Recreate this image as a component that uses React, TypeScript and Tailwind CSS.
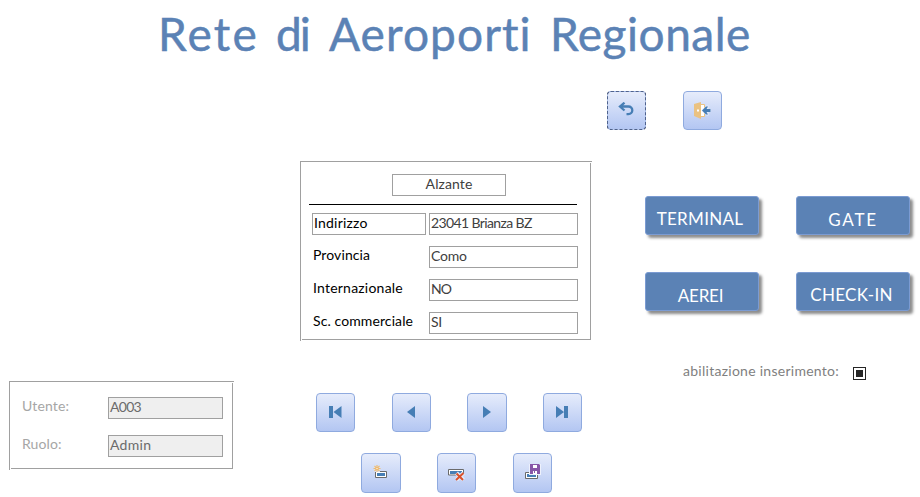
import type { ReactNode } from 'react';

const body = "font-['Lato','Noto_Sans',sans-serif]";

function IconButton({ className = '', focused = false, label, children }: { className?: string; focused?: boolean; label: string; children: ReactNode }) {
  return (
    <button
      aria-label={label}
      className={`flex shrink-0 items-center justify-center rounded-[4px] border bg-linear-to-b from-[#e6ecfb] to-[#b3c6f2] ${focused ? 'border-dashed border-[#111c38] outline outline-1 -outline-offset-1 outline-[#8faadf]/50' : 'border-[#8faadf]'} ${className || 'h-[39px] w-[39px]'}`}
    >
      {children}
    </button>
  );
}

function Panel({ className, children }: { className: string; children: ReactNode }) {
  return (
    <div className={`relative border border-[#a0a0a0] ${className}`}>
      {children}
      <span className="absolute -top-px -right-[2px] h-px w-px bg-[#a0a0a0]" />
      <span className="absolute top-0 -right-px h-px w-px bg-white" />
      <span className="absolute -bottom-[2px] -left-px h-px w-px bg-[#a0a0a0]" />
      <span className="absolute -bottom-px left-0 h-px w-px bg-white" />
    </div>
  );
}

function NavButton({ children, pad, tracking, height = 'h-[39px]' }: { children: string; pad: string; tracking: string; height?: string }) {
  return (
    <button className={`w-[114px] shrink-0 rounded-[3px] border border-[#7b9bd2] bg-[#5b82b5] text-center font-['Lato',sans-serif] text-[17px] leading-[20px] text-white shadow-[3px_3px_3px_#8c8c8c] ${pad} ${tracking} ${height}`}>
      <span className="block">{children}</span>
    </button>
  );
}

function Row({ label, value, boxed = false, labelTrack, valueTrack }: { label: string; value: string; boxed?: boolean; labelTrack: string; valueTrack: string }) {
  return (
    <div className="flex h-[22px] gap-[3px]">
      <div className={`w-[114px] pl-px whitespace-nowrap text-black ${labelTrack} ${boxed ? 'border border-[#a0a0a0] leading-[18px]' : 'leading-[17px]'}`}>{label}</div>
      <div className={`w-[149px] whitespace-nowrap border border-[#a0a0a0] pl-px leading-[18px] text-[#404040] ${valueTrack}`}>{value}</div>
    </div>
  );
}

function UserRow({ label, value, labelTrack, valueTrack }: { label: string; value: string; labelTrack: string; valueTrack: string }) {
  return (
    <div className="flex h-[22px]">
      <div className={`w-[86px] leading-[17px] text-[#a6a6a6] ${labelTrack}`}>{label}</div>
      <div className={`w-[115px] border border-[#a0a0a0] bg-[#efefef] pl-px leading-[18px] text-[#6b6b6b] ${valueTrack}`}>{value}</div>
    </div>
  );
}

export default function App() {
  return (
    <div className={`h-[497px] w-[920px] overflow-hidden bg-white text-[14px] ${body}`}>
      <h1 className="flex h-[91px] pl-[158px] pt-[8px] font-['Lato',sans-serif] text-[46px] leading-[52px] font-normal whitespace-nowrap text-[#5b82b5] [-webkit-text-stroke:0.5px_#5b82b5] [font-variant-ligatures:none]">
        <span className="w-[118px] tracking-[2.2px]">Rete</span>
        <span className="w-[53px] tracking-[-2px]">di</span>
        <span className="w-[221px] tracking-[1.1px]">Aeroporti</span>
        <span className="tracking-[0.5px]">Regionale</span>
      </h1>
      <main className="flex h-[406px]">
        <aside className="w-[300px] pt-[290px] pl-[9px]">
          <Panel className="flex h-[88px] w-[224px] flex-col gap-[16px] pt-[15px] pl-[12px]">
            <UserRow label="Utente:" value="A003" labelTrack="tracking-[0.15px]" valueTrack="tracking-[-0.7px]" />
            <UserRow label="Ruolo:" value="Admin" labelTrack="tracking-[0.1px]" valueTrack="tracking-[0.3px]" />
          </Panel>
        </aside>
        <section className="w-[307px] pt-[70px]">
          <Panel className="h-[179px] w-[291px] pt-[12px]">
            <div className="ml-[91px] h-[22px] w-[114px] border border-[#a0a0a0] text-center leading-[18px] tracking-[0.1px] text-[#404040]">Alzante</div>
            <div className="mt-[8px] ml-[8px] h-px w-[268px] bg-black" />
            <div className="mt-[8px] ml-[11px] flex flex-col gap-[11px]">
              <Row label="Indirizzo" value="23041 Brianza BZ" boxed labelTrack="tracking-[0.2px]" valueTrack="tracking-[-0.62px]" />
              <Row label="Provincia" value="Como" labelTrack="tracking-[0.1px]" valueTrack="tracking-[-0.2px]" />
              <Row label="Internazionale" value="NO" labelTrack="tracking-[0.22px]" valueTrack="tracking-[-0.9px]" />
              <Row label="Sc. commerciale" value="SI" labelTrack="tracking-[0.1px]" valueTrack="tracking-[-0.3px]" />
            </div>
          </Panel>
          <div className="mt-[53px] ml-[16px] flex">
            <IconButton label="Primo" className="mr-[37px] h-[39px] w-[39px]">
              <svg width="13" height="12" className="mb-px fill-[#467eb5]"><path d="M0 0h4v12H0zM12.5 0v12L4.5 6z" /></svg>
            </IconButton>
            <IconButton label="Precedente" className="mr-[36px] h-[39px] w-[39px]">
              <svg width="8" height="12" className="mr-px mb-px fill-[#467eb5]"><path d="M8 0v12L0 6z" /></svg>
            </IconButton>
            <IconButton label="Successivo" className="mr-[36px] h-[39px] w-[40px]">
              <svg width="8" height="12" className="mb-px fill-[#467eb5]"><path d="M0 0v12l8-6z" /></svg>
            </IconButton>
            <IconButton label="Ultimo">
              <svg width="13" height="12" className="mb-px fill-[#467eb5]"><path d="M8 0h4v12H8zM0 0v12l8-6z" /></svg>
            </IconButton>
          </div>
          <div className="mt-[21px] ml-[61px] flex">
            <IconButton label="Nuovo" className="mr-[36px] h-[40px] w-[40px]">
              <svg width="16" height="14" viewBox="0 0 16 14" className="mb-[2px]">
                <path d="M2.500 6.500h11v6h-11z" fill="#fff" stroke="#6a6a6a" />
                <path d="M4 8h8v3H4z" fill="#467eb5" />
                <path d="M1 1h6v6H1z" fill="#d9e2f8" />
                <path d="M4 0v7M.5 3.500h7M1.500 1l5 5M6.500 1l-5 5" stroke="#eebb70" strokeWidth="1.100" />
                <path d="M3.500 3h1v1h-1z" fill="#fff" />
              </svg>
            </IconButton>
            <IconButton label="Elimina" className="mr-[37px] h-[40px] w-[39px]">
              <svg width="17" height="13" viewBox="0 0 17 13" className="mt-[2px]">
                <path d="M.5 1.500h15v5.500H.5z" fill="#fff" stroke="#6a6a6a" />
                <path d="M2 3h12v3H2z" fill="#467eb5" />
                <path d="M8.500 5l7 7M15.500 5l-7 7" stroke="#e4ebfa" strokeWidth="4" />
                <path d="M8.500 5.500l6.500 6.500M15.500 5L8 12" stroke="#d9512c" strokeWidth="2" />
              </svg>
            </IconButton>
            <IconButton label="Salva" className="h-[40px] w-[39px]">
              <svg width="16" height="16" viewBox="0 0 16 16" className="mb-[2px] ml-px">
                <path d="M.5 8.500h12v6H.5z" fill="#fff" stroke="#6a6a6a" />
                <path d="M2 10h9v3H2z" fill="#467eb5" />
                <path d="M4 0h12v11H4z" fill="#edf1fc" />
                <path d="M5 0h9l1 1v9H5z" fill="#8756a8" />
                <path d="M8 1h4v3H8zM8 7h4v3H8z" fill="#fff" />
                <path d="M9 7h1v2H9z" fill="#8756a8" />
              </svg>
            </IconButton>
          </div>
        </section>
        <section className="w-[313px]">
          <div className="flex gap-[37px]">
            <IconButton label="Annulla" focused>
              <svg width="16" height="14" viewBox="0 0 16 14" className="mr-[1px] mb-[3px]" fill="none" stroke="#467eb5" strokeWidth="2.300">
                <path d="M2 4.500h8.500a3.800 3.800 0 0 1 0 7.600H8.500M6.500 .7L2 4.500l4.500 4" />
              </svg>
            </IconButton>
            <IconButton label="Esci">
              <svg width="17" height="17" viewBox="0 0 17 17" className="mb-px">
                <path d="M6 2.500h4.500v12H6" fill="#fff" stroke="#eac282" />
                <path d="M0 2l7-2v17l-7-3z" fill="#eac282" />
                <path d="M3 7.500h2v2H3z" fill="#fff" />
                <path d="M7.500 8.500l5-5h2V7H17v3h-2.500v3.500h-2z" fill="#e4ebfa" />
                <path d="M8 8.500L12 4.500h2L12.500 7H16.500v3h-4l1.500 2.500h-2z" fill="#467eb5" />
              </svg>
            </IconButton>
          </div>
          <div className="mt-[66px] ml-[38px] grid grid-cols-[114px_114px] gap-x-[37px]">
            <NavButton pad="pr-[4px] pt-[7px]" tracking="tracking-[0.3px]">TERMINAL</NavButton>
            <NavButton pad="pt-[9px]" tracking="tracking-[1.8px]">GATE</NavButton>
          </div>
          <div className="mt-[37px] ml-[38px] grid grid-cols-[114px_114px] gap-x-[37px]">
            <NavButton pad="pr-[3px] pt-[9px]" tracking="tracking-[-0.2px]">AEREI</NavButton>
            <NavButton pad="pr-[3px] pt-[7px]" tracking="tracking-[0.3px]">CHECK-IN</NavButton>
          </div>
          <div className="mt-[51px] ml-[76px] flex items-start">
            <span className="w-[170px] leading-[17px] tracking-[0.27px] text-[#7f7f7f]">abilitazione inserimento:</span>
            <span className="mt-[5px] flex h-[13px] w-[13px] items-center justify-center border border-[#262626] bg-white">
              <span className="h-[7px] w-[7px] bg-[#262626]" />
            </span>
          </div>
        </section>
      </main>
    </div>
  );
}
